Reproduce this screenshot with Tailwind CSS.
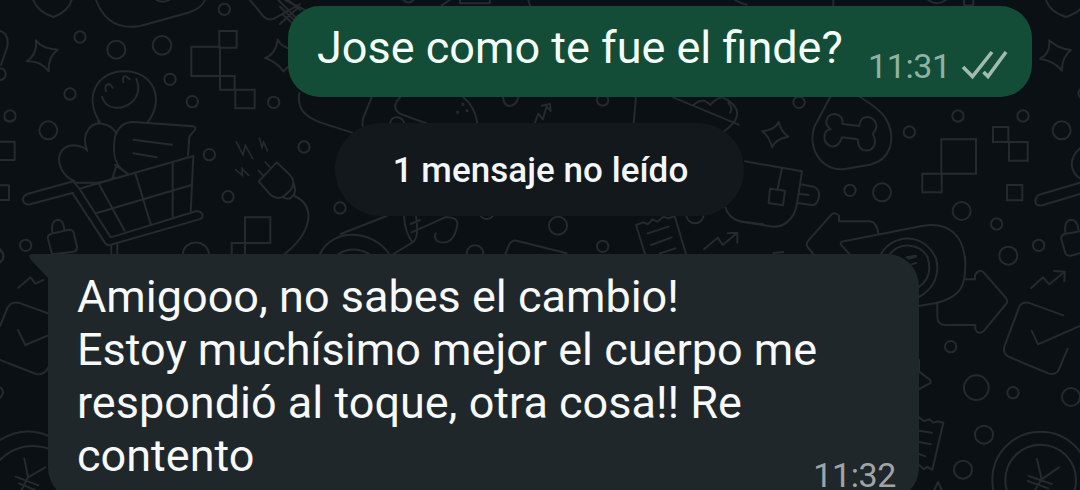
<!DOCTYPE html>
<html lang="es">
<head>
<meta charset="utf-8">
<title>Chat</title>
<script src="https://cdn.jsdelivr.net/npm/@tailwindcss/browser@4"></script>
</head>
<body class="bg-[#0a1014]">
<main class="relative isolate flex h-[490px] w-[1080px] flex-col overflow-hidden bg-[#0a1014] pt-1.5 font-['Roboto',sans-serif]">
  <!-- Wallpaper doodles; each group is drawn at three times its final size -->
  <svg class="absolute inset-0 -z-10" width="1080" height="490" viewBox="0 0 1080 490" fill="none" stroke="#242a2e" stroke-width="6" stroke-linecap="round" stroke-linejoin="round" aria-hidden="true">
    <g transform="scale(.33333)">
      <path d="M100 0Q112 35 160 51Q205 35 215 0M288 0C310 60 350 90 420 78L565 38Q605 25 615 0M470 0Q490 10 508 0M750 0L793 52Q805 62 822 56L900 12M835 0L895 60M865 0L900 30M850 45L880 72"/>
      <circle cx="673" cy="28" r="17"/><circle cx="240" cy="111" r="17"/><circle cx="349" cy="149" r="27"/><circle cx="486" cy="136" r="28"/><circle cx="510" cy="238" r="17"/><circle cx="210" cy="282" r="17"/><circle cx="30" cy="348" r="17"/><circle cx="577" cy="305" r="17"/><circle cx="821" cy="307" r="17"/>
      <path d="M0 93Q28 100 22 140L3 195M0 205A17 17 0 0 1 0 240"/>
      <path d="M108 121Q124 146 173 149Q143 172 146 214Q122 182 80 184Q112 164 108 121Z"/>
      <path d="M833 118Q845 143 880 149M850 214Q830 185 795 174Q828 162 833 118M865 200L850 214"/>
      <path stroke-linejoin="miter" d="M658 93H710V143H658ZM574 140H660V228H574ZM660 143V269H704V228H660M706 269H764V325H706Z"/>
      <path d="M300 367C250 290 290 214 374 214C458 214 497 295 443 367M306 290C318 330 365 332 395 307Q425 280 409 236M318 274Q312 252 328 252L338 263M370 247Q365 228 378 229L389 238"/>
    </g>
    <g transform="translate(0 120) scale(.33333)">
      <circle cx="145" cy="31" r="27"/><circle cx="628" cy="104" r="17"/><circle cx="684" cy="230" r="17"/><circle cx="912" cy="81" r="17"/><circle cx="77" cy="376" r="17"/><circle cx="1020" cy="264" r="17"/>
      <path d="M0 65H44V120H0M0 196H27V240H0M0 391Q20 408 0 427M15 0Q27 7 38 0M295 0V8"/>
      <path d="M225 184C170 165 155 80 220 76Q250 78 262 92C240 40 275 5 305 11Q335 15 350 40M350 135L338 172M230 188H290Q320 185 345 172M382 160C345 140 335 105 345 50Q360 5 400 6L580 19Q590 22 584 30L568 50L564 105M400 59L516 74M400 100L470 112M345 135L382 160"/>
      <path d="M238 206L580 108L572 277M220 184L82 222Q66 230 69 242Q75 256 90 253L220 218M238 206L332 352L590 273Q608 275 608 288Q608 295 595 299L330 375Q320 378 314 367L218 220M220 184L238 206M297 192L374 332M406 160L452 312M518 128V290M288 280L572 196"/>
      <path d="M334 377V405M352 372V405M156 403L144 356Q142 344 154 341L207 329Q218 328 221 338L231 380Q232 392 222 395L156 403M157 337Q152 299 176 299Q192 302 193 332M548 405C550 355 625 355 627 405"/>
      <path stroke-linejoin="miter" stroke-width="5" d="M709 66L729 104L736 76L758 116M778 54L786 82L791 66L802 92M707 149L727 166L726 145L746 166M775 151L790 167M796 126L810 142"/>
      <path d="M776 184L830 127L868 163Q890 185 872 210L850 230Q830 240 812 225ZM880 188Q894 220 870 235Q860 238 850 232M884 228C950 260 935 340 850 405"/>
      <path stroke-linejoin="miter" d="M735 292H811V369H735ZM735 369H695V405M735 369V405"/>
    </g>
    <g transform="translate(0 240) scale(.33333)">
      <path d="M0 28Q22 48 0 67M55 143L92 112L106 131L130 120M0 258L22 204Q33 184 55 188L150 222M54 270L76 315L150 284M0 360L108 402Q135 407 146 380M0 442Q18 455 0 474M0 600Q75 555 150 590M0 660Q60 600 150 626M73 656L84 712L136 682M47 710L115 736M57 730L105 750M84 712L65 750"/>
    </g>
    <g transform="translate(320 90) scale(.33333)">
      <path d="M-62 10C-70 60 -40 82 0 97L96 128M155 22L132 78Q126 90 128 108M240 22C215 50 225 65 250 75L320 100M210 100Q215 80 232 82Q250 85 252 100M430 22Q465 50 472 100M549 22Q552 48 570 48Q590 45 595 22M645 98L655 71L668 88L680 50L692 63M665 47L690 42L692 63M948 22L941 100M1060 22L1256 104M1120 45Q1150 20 1170 45Q1195 20 1210 22M1210 22Q1260 50 1250 80Q1245 100 1212 124M1225 38Q1240 55 1230 68"/>
      <circle cx="848" cy="30" r="17"/><circle cx="429" cy="43" r="2"/><circle cx="413" cy="67" r="2"/><circle cx="441" cy="62" r="2"/><circle cx="714" cy="407" r="27"/><circle cx="848" cy="469" r="17"/><circle cx="500" cy="363" r="24"/><circle cx="1125" cy="374" r="26"/>
      <path d="M0 492C40 410 160 420 208 492M55 492Q100 465 148 492M62 432L200 378M252 378Q255 430 278 457Q298 445 288 378M272 402L300 390M275 427L375 382Q415 380 412 405Q400 470 355 455Q340 445 347 430M278 457L220 492M440 492C440 457 490 457 490 492M556 492L565 470Q572 450 590 452L740 490M948 405L975 492M948 405L970 397L983 403L998 388L1012 395L1030 380L1045 385L1064 378L1098 492M983 430L1046 410M993 465L1055 442M1020 490L1066 475M1152 478L1193 443L1208 465L1252 428M1223 430L1252 428V458M1215 350Q1230 395 1280 397L1330 403"/>
    </g>
    <g transform="translate(720 0) scale(.33333)">
      <path d="M978 0Q990 36 1038 51Q1065 42 1080 28M988 121Q1015 147 1053 150Q1025 172 1026 212Q1003 183 960 176Q991 163 988 121ZM625 0Q650 20 678 0M732 0V15Q742 20 760 15V0M45 0Q60 10 80 14M340 0V16M1080 268Q1070 281 1080 292"/>
      <circle cx="237" cy="307" r="17"/>
    </g>
    <g transform="translate(280 0) scale(.33333)">
      <path d="M0 72L52 25M0 20L45 62M15 0L75 30M370 0Q385 15 400 0M485 16L510 0M540 0V10H630V0M745 0L750 16"/>
    </g>
    <g transform="translate(720 110) scale(.33333)">
      <path d="M176 36Q182 64 205 80Q165 87 156 112Q148 80 127 64Q165 60 176 36ZM331 -40L283 50C260 120 310 190 380 176L450 164C510 150 530 90 500 30Q485 0 415 -42"/>
      <path d="M368 42L418 48C420 10 465 15 469 45Q470 60 458 71Q475 105 450 120Q415 128 413 88L366 82Q355 115 330 108C305 95 310 60 332 58C308 40 320 12 345 12Q370 16 368 42Z"/>
      <circle cx="568" cy="66" r="17"/><circle cx="714" cy="18" r="17"/><circle cx="909" cy="18" r="17"/><circle cx="1025" cy="61" r="27"/><circle cx="390" cy="241" r="17"/><circle cx="486" cy="247" r="27"/><circle cx="725" cy="303" r="27"/><circle cx="830" cy="342" r="17"/><circle cx="956" cy="406" r="17"/><circle cx="865" cy="437" r="27"/>
      <path stroke-linejoin="miter" d="M664 88H768V191H664ZM607 191H665V247H607ZM819 51H865V96H819ZM867 96H923V152H867ZM861 225H907V271H861Z"/>
      <path d="M1080 115Q1055 135 1055 165Q1060 195 1080 205M1080 218L955 255Q940 270 950 284Q957 288 970 285L1080 252M1036 365Q1032 330 1055 329Q1073 332 1075 358M1080 364L1034 372Q1022 376 1024 388L1036 430Q1040 438 1052 437L1080 430"/>
      <path d="M75 154L246 184L232 275C225 330 190 355 150 349L70 336M186 174L173 236M150 236L195 242L189 286L146 279ZM242 223L280 230Q300 237 297 260Q292 290 270 284L232 279M236 251L266 255M160 429L190 426"/>
      <path d="M280 432L262 410Q257 402 265 392L333 315Q345 303 357 318V334H450Q470 336 475 370M388 432L363 404Q359 394 372 394L610 347C690 335 730 380 735 450M483 432C520 370 610 365 648 445M510 432C540 395 600 400 622 440M560 442L588 437"/>
    </g>
    <g transform="translate(800 230) scale(.33333)">
      <path d="M495 80C500 160 490 200 405 220L355 228M408 85C420 130 405 175 355 202M382 80C395 120 385 152 355 172M325 86L348 80M335 103L348 99M498 148H525V135Q535 117 550 126L618 204Q625 214 618 222L552 302Q535 317 526 298V285H435Q412 283 412 260V220M357 390V425L388 448Q396 456 388 461L357 477M694 174L729 142L748 163L792 127M762 123L794 125L793 154M790 256L685 218Q665 215 658 230L613 350Q608 370 625 380L745 430Q765 437 776 420L803 356M695 302L714 343L840 288"/>
      <circle cx="452" cy="350" r="17"/><circle cx="529" cy="473" r="37"/><circle cx="639" cy="488" r="17"/><circle cx="813" cy="501" r="27"/><circle cx="552" cy="614" r="27"/><circle cx="489" cy="719" r="27"/><circle cx="722" cy="750" r="145"/><circle cx="722" cy="750" r="106"/>
      <path d="M357 562L372 573L388 568L400 578L413 574L430 578L397 719L382 711L371 717L357 705M357 602L396 608M357 636L392 643M357 672L376 679M403 780L414 756L425 780M711 687L725 748L777 712M686 738L755 762M683 753L745 775M725 748L705 780"/>
    </g>
  </svg>

  <section class="mr-12 flex h-[91px] w-[744px] shrink-0 self-end rounded-[32px] bg-[#144d37] pl-[29px]">
    <p class="mt-[15px] w-[551px] whitespace-nowrap text-[45px] leading-[53px] text-[#f5fffa]">Jose como te fue el finde?</p>
    <time class="mt-[40px] w-[92px] text-[34px] leading-[40px] tracking-[-0.4px] text-[#91b1a4]">11:31</time>
    <svg class="mt-[42px]" width="50" height="40" viewBox="0 0 50 40" fill="none" stroke="#a1bbb0" stroke-width="3.600" aria-hidden="true">
      <path d="M3 19L12.500 28.500L32 4M23.500 24L28 28.500L46 4"/>
    </svg>
  </section>

  <div class="mt-[26px] ml-[335px] flex h-[93px] w-[409px] shrink-0 items-center justify-center rounded-full bg-[#12181c] pt-[2px]">
    <span class="ml-[2px] whitespace-nowrap text-[35px] font-medium leading-[40px] tracking-[0.04px] text-[#f4f7fa]">1 mensaje no leído</span>
  </div>

  <section class="mt-[38px] ml-[29px] flex shrink-0 items-start">
    <svg width="20" height="34" viewBox="0 0 20 34" fill="#1f272a" aria-hidden="true"><path d="M3 0H20V25L19 24L2 6Q-2 0 3 0Z"/></svg>
    <div class="-ml-px flex h-[246px] w-[871px] flex-col rounded-[32px] rounded-tl-none bg-[#1f272a] pt-[16px] pl-[29px]">
      <p class="whitespace-nowrap text-[45px] leading-[53px] text-[#f7f9fa]">Amigooo, no sabes el cambio!<br>Estoy muchísimo mejor el cuerpo me<br>respondió al toque, otra cosa!! Re<br>contento</p>
      <time class="-mt-[23px] mr-[23px] self-end text-[34px] leading-[32px] tracking-[-0.4px] text-[#a0a4a6]">11:32</time>
    </div>
  </section>
</main>
</body>
</html>
